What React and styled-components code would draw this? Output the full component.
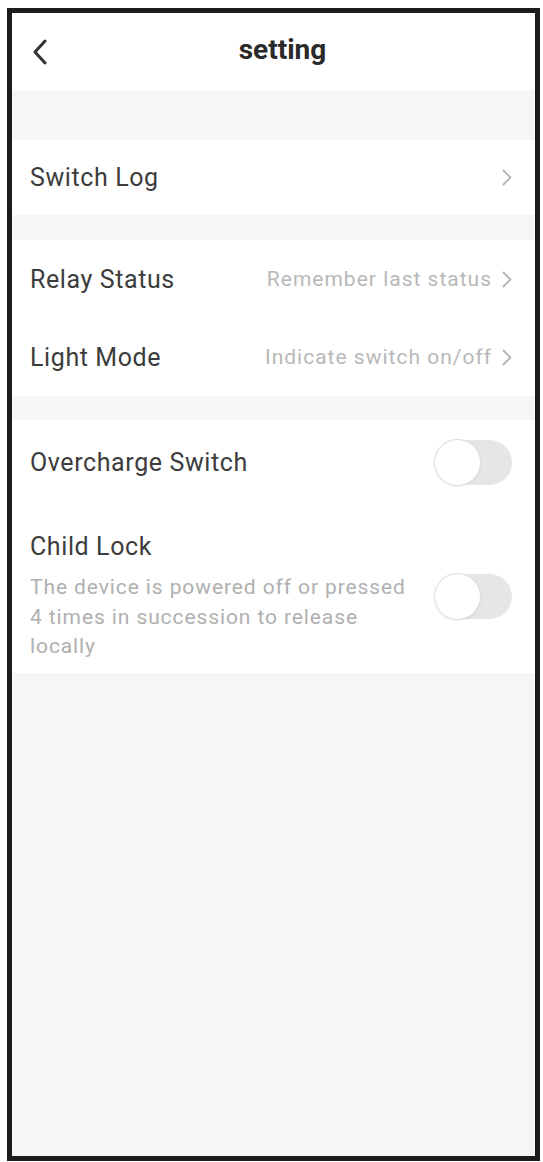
import React from "react";
import styled, { createGlobalStyle } from "styled-components";

const Global = createGlobalStyle`
  html, body { margin: 0; padding: 0; background: #ffffff; }
  body { font-family: Roboto, "Noto Sans", "Liberation Sans", sans-serif; -webkit-font-smoothing: antialiased; }
  * { box-sizing: border-box; }
`;

const Frame = styled.div`
  margin: 8px 0 0 7px;
  width: 533px;
  height: 1153px;
  border: 5px solid #1c1c1c;
  background: #f6f6f6;
  display: flex;
  flex-direction: column;
  overflow: hidden;
`;

const Header = styled.header`
  height: 77px;
  background: #ffffff;
  display: grid;
  grid-template-columns: 1fr auto 1fr;
  align-items: center;
  padding: 0 20px;
`;

const BackButton = styled.button`
  justify-self: start;
  border: none;
  background: none;
  padding: 0;
  display: flex;
  align-items: center;
  color: #333;
`;

const Title = styled.h1`
  margin: 0 0 0 18px;
  font-size: 28px;
  font-weight: 700;
  color: #2a2a2a;
  line-height: 1;
  padding-bottom: 4px;
`;

const Section = styled.section`
  background: #ffffff;
  margin-top: ${(p) => p.$gap}px;
  display: flex;
  flex-direction: column;
`;

const Row = styled.div`
  height: ${(p) => p.$h}px;
  display: flex;
  align-items: center;
  justify-content: space-between;
  padding: 0 23px 0 18px;
`;

const Label = styled.span`
  font-size: 25px;
  color: #3c3c3c;
  letter-spacing: 0.6px;
`;

const Value = styled.span`
  display: flex;
  align-items: center;
  gap: 10px;
  font-size: 21px;
  color: #b8b8b8;
  letter-spacing: 1px;
`;

const ChevronRight = ({ color = "#b5b5b5" }) => (
  <svg width="10" height="17" viewBox="0 0 10 17" fill="none">
    <path d="M1.5 1.5 L8.5 8.5 L1.5 15.5" stroke={color} strokeWidth="1.8" strokeLinecap="round" strokeLinejoin="round" />
  </svg>
);

const Toggle = styled.div`
  position: relative;
  width: 77px;
  height: 45px;
  border-radius: 23px;
  background: #e6e6e6;
  flex-shrink: 0;
  &::after {
    content: "";
    position: absolute;
    left: 0;
    top: 0;
    width: 45px;
    height: 45px;
    border-radius: 50%;
    background: #ffffff;
    box-shadow: 0 0 0 1px #dedede, 0 1px 3px rgba(0, 0, 0, 0.12);
  }
`;

const LockRow = styled.div`
  display: flex;
  align-items: center;
  justify-content: space-between;
  padding: 27px 23px 11px 18px;
`;

const LockText = styled.div`
  display: flex;
  flex-direction: column;
  gap: 11px;
`;

const Desc = styled.p`
  margin: 0;
  max-width: 390px;
  font-size: 21px;
  line-height: 29.5px;
  color: #b0b0b0;
  letter-spacing: 0.9px;
`;

const LockTitle = styled(Label)`
  line-height: 30px;
`;

export default function App() {
  return (
    <>
      <Global />
      <Frame>
        <Header>
          <BackButton aria-label="back">
            <svg width="16" height="26" viewBox="0 0 16 26" fill="none">
              <path d="M13 2 L3 13 L13 24" stroke="#333" strokeWidth="3" strokeLinecap="round" strokeLinejoin="round" />
            </svg>
          </BackButton>
          <Title>setting</Title>
          <span />
        </Header>

        <Section $gap={50}>
          <Row $h={75}>
            <Label>Switch Log</Label>
            <ChevronRight />
          </Row>
        </Section>

        <Section $gap={25}>
          <Row $h={78}>
            <Label>Relay Status</Label>
            <Value>
              Remember last status
              <ChevronRight />
            </Value>
          </Row>
          <Row $h={78}>
            <Label>Light Mode</Label>
            <Value>
              Indicate switch on/off
              <ChevronRight />
            </Value>
          </Row>
        </Section>

        <Section $gap={24}>
          <Row $h={85}>
            <Label>Overcharge Switch</Label>
            <Toggle />
          </Row>
          <LockRow>
            <LockText>
              <LockTitle>Child Lock</LockTitle>
              <Desc>The device is powered off or pressed 4 times in succession to release locally</Desc>
            </LockText>
            <Toggle />
          </LockRow>
        </Section>
      </Frame>
    </>
  );
}
